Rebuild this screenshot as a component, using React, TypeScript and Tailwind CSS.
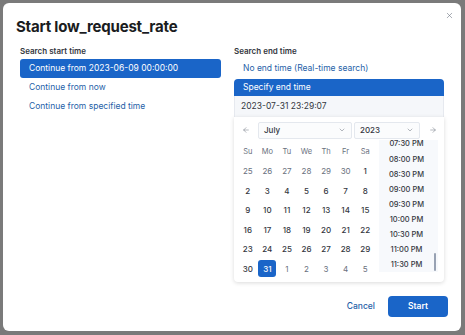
import React from "react";
import { X, ArrowLeft, ArrowRight, ChevronDown } from "lucide-react";

const weekdays = ["Su", "Mo", "Tu", "We", "Th", "Fr", "Sa"];

type Day = { n: number; muted?: boolean; selected?: boolean };

const weeks: Day[][] = [
  [{ n: 25, muted: true }, { n: 26, muted: true }, { n: 27, muted: true }, { n: 28, muted: true }, { n: 29, muted: true }, { n: 30, muted: true }, { n: 1 }],
  [2, 3, 4, 5, 6, 7, 8].map((n) => ({ n })),
  [9, 10, 11, 12, 13, 14, 15].map((n) => ({ n })),
  [16, 17, 18, 19, 20, 21, 22].map((n) => ({ n })),
  [23, 24, 25, 26, 27, 28, 29].map((n) => ({ n })),
  [{ n: 30 }, { n: 31, selected: true }, { n: 1, muted: true }, { n: 2, muted: true }, { n: 3, muted: true }, { n: 4, muted: true }, { n: 5, muted: true }],
];

const times = ["07:30 PM", "08:00 PM", "08:30 PM", "09:00 PM", "09:30 PM", "10:00 PM", "10:30 PM", "11:00 PM", "11:30 PM"];

function OptionRow({ label, selected }: { label: string; selected?: boolean }) {
  return (
    <div
      className={`h-[19px] flex items-center px-[9px] rounded-[3px] text-[8.5px] ${
        selected ? "bg-[#1a65c8] text-white" : "text-[#1f5fa8]"
      }`}
    >
      {label}
    </div>
  );
}

function MiniSelect({ value, className = "" }: { value: string; className?: string }) {
  return (
    <div
      className={`h-[17px] flex items-center justify-between pl-[5px] pr-[5px] bg-[#fbfcfd] border border-[#e4e8ee] rounded-[2px] text-[8px] font-medium text-[#343741] ${className}`}
    >
      <span>{value}</span>
      <ChevronDown className="w-[8px] h-[8px] text-[#69707d]" strokeWidth={1.5} />
    </div>
  );
}

function Calendar() {
  return (
    <div className="h-[165px] bg-white rounded-b-[4px] shadow-[0_1px_4px_rgba(0,0,0,0.15)] pt-[4px]">
      <div className="flex items-center h-[18px] pl-[8px] pr-[7px]">
        <ArrowLeft className="w-[8px] h-[8px] text-[#69707d]" strokeWidth={1.5} />
        <MiniSelect value="July" className="ml-[8px] w-[94px]" />
        <MiniSelect value="2023" className="ml-[2px] w-[66px]" />
        <ArrowRight className="ml-auto w-[8px] h-[8px] text-[#69707d]" strokeWidth={1.5} />
      </div>
      <div className="flex pl-[4px] pr-[5px] mt-[1px]">
        <div className="w-[137px] pt-[2px]">
          <div className="grid grid-cols-7 h-[19.5px] items-center text-center text-[7.5px] text-[#69707d]">
            {weekdays.map((d) => (
              <span key={d}>{d}</span>
            ))}
          </div>
          {weeks.map((w, i) => (
            <div key={i} className="grid grid-cols-7 h-[19.5px] items-center justify-items-center text-[8px] font-medium">
              {w.map((d, j) => (
                <span
                  key={j}
                  className={`w-[18px] h-[17px] flex items-center justify-center rounded-[3px] ${
                    d.selected ? "bg-[#1a65c8] text-white" : d.muted ? "text-[#69707d] font-normal" : "text-[#343741]"
                  }`}
                >
                  {d.n}
                </span>
              ))}
            </div>
          ))}
        </div>
        <div className="relative ml-[4px] w-[59px] h-[132px] bg-[#f7f9fc] overflow-hidden">
          <div className="-mt-[3.5px] pr-[4px]">
            {times.map((t) => (
              <div key={t} className="h-[15.1px] flex items-center justify-center text-[7.5px] font-medium text-[#343741]">
                {t}
              </div>
            ))}
          </div>
          <div className="absolute right-[2px] top-[113px] w-[2px] h-[18px] rounded-full bg-[#98a2b3]" />
        </div>
      </div>
    </div>
  );
}

export default function App() {
  return (
    <div className="w-[465px] h-[335px] bg-[#7a7a7a] p-[3px] font-['Inter',sans-serif]">
      <div className="relative w-[458px] h-[328px] bg-white rounded-[6px] flex flex-col">
        <button className="absolute right-[5px] top-[5px] w-[14px] h-[14px] flex items-center justify-center text-[#69707d]">
          <X className="w-[9px] h-[9px]" strokeWidth={1.5} />
        </button>
        <h1 className="pl-[13px] pt-[12px] h-[36px] leading-[24px] text-[15px] tracking-[-0.2px] font-bold text-[#1a1c21]">
          Start low_request_rate
        </h1>
        <div className="flex gap-[13px] px-[17px] mt-[6px]">
          <div className="w-[201px]">
            <div className="h-[12px] leading-[12px] text-[8px] font-semibold text-[#343741]">Search start time</div>
            <div className="mt-[2px]">
              <OptionRow label="Continue from 2023-06-09 00:00:00" selected />
              <OptionRow label="Continue from now" />
              <OptionRow label="Continue from specified time" />
            </div>
          </div>
          <div className="w-[210px]">
            <div className="h-[12px] leading-[12px] text-[8px] font-semibold text-[#343741]">Search end time</div>
            <div className="mt-[2px]">
              <OptionRow label="No end time (Real-time search)" />
              <div className="mt-[1px] h-[17px] flex items-center px-[9px] rounded-t-[4px] bg-[#1a65c8] text-white text-[8.5px]">
                Specify end time
              </div>
              <div className="h-[21px] flex items-center px-[6px] bg-[#f5f7fa] border-x border-[#e6e9ef] text-[8.5px] text-[#343741]">
                2023-07-31 23:29:07
              </div>
              <Calendar />
            </div>
          </div>
        </div>
        <div className="mt-auto flex items-center justify-end gap-[13px] pr-[13px] pb-[14px]">
          <button className="text-[8.5px] font-medium text-[#1f5fa8]">Cancel</button>
          <button className="w-[60px] h-[21px] rounded-[4px] bg-[#1a65c8] text-white text-[8.5px] font-semibold">
            Start
          </button>
        </div>
      </div>
    </div>
  );
}
